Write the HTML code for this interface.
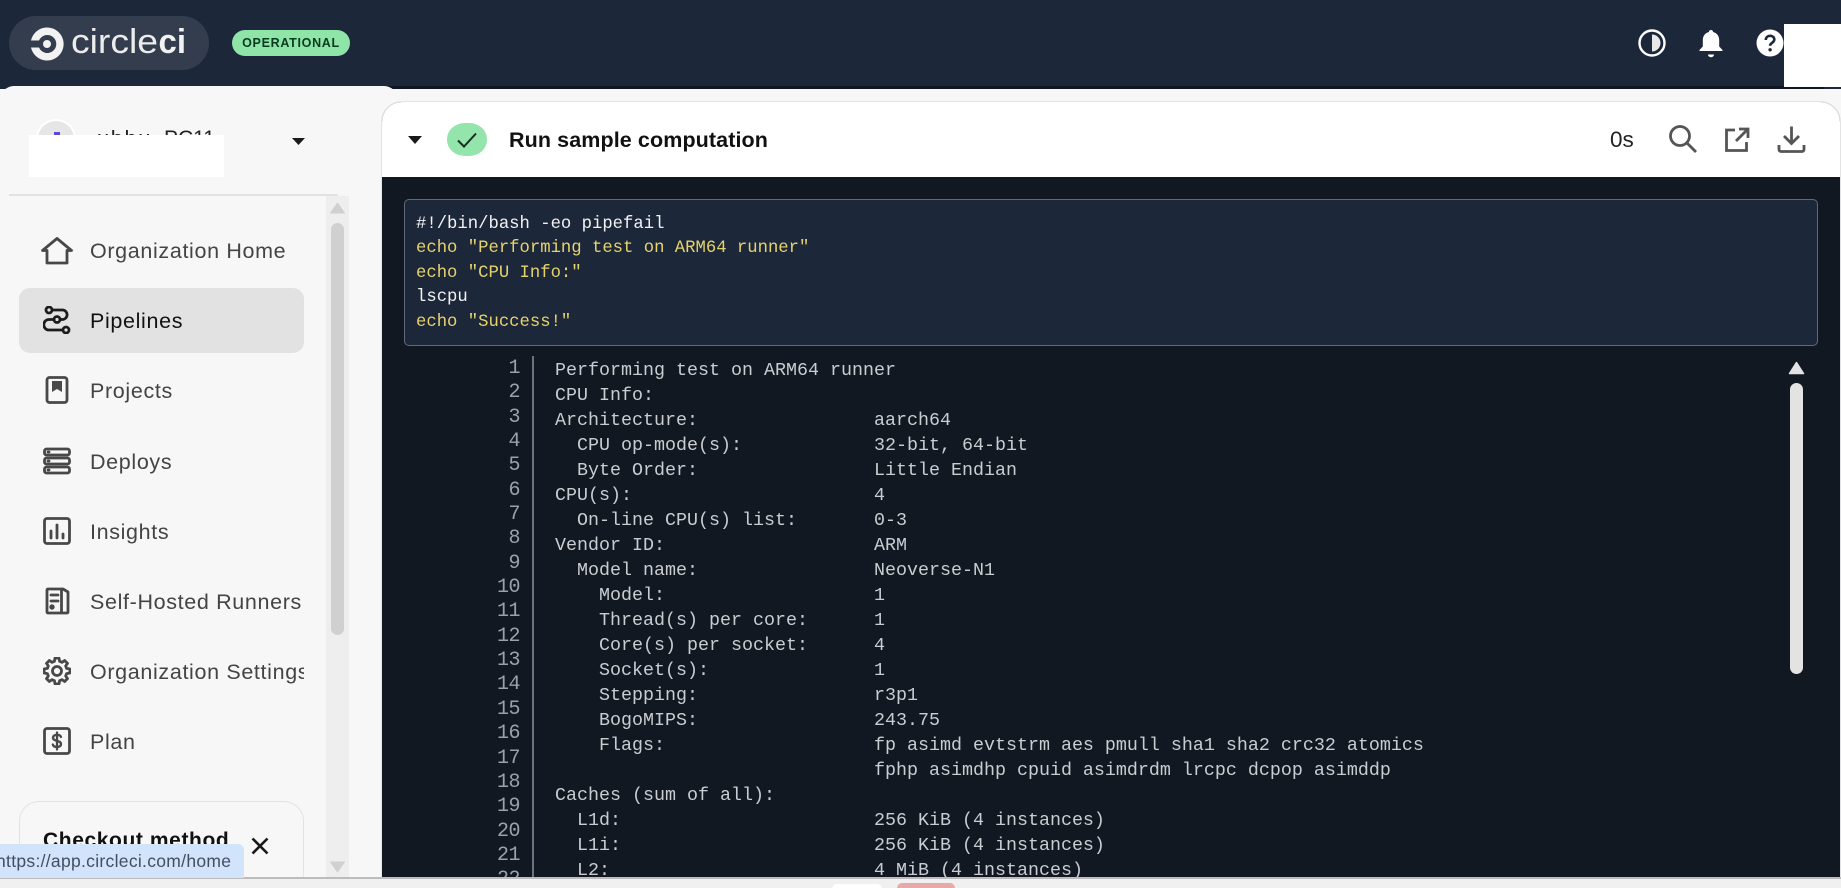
<!DOCTYPE html>
<html><head><meta charset="utf-8"><title>CircleCI</title>
<style>
html,body{margin:0;padding:0;width:1841px;height:888px;overflow:hidden;background:#f7f7f7}
body{position:relative;font-family:"Liberation Sans",sans-serif}
.a{position:absolute}
.nav{position:absolute;left:90px;width:214px;overflow:hidden;white-space:nowrap;font-size:21.5px;line-height:30px;letter-spacing:.65px;color:#444}
.ic{position:absolute;left:43px;width:28px;height:28px;fill:none;stroke:#484848;stroke-width:2.8;stroke-linejoin:round;stroke-linecap:round}
pre{margin:0;font-family:"Liberation Mono",monospace}
</style></head><body>
<div class="a" style="left:0;top:0;width:1841px;height:90px;background:#1c273a"></div>
<div class="a" style="left:380px;top:86px;width:1445px;height:3px;background:#0f1621;border-radius:0 0 6px 0"></div>
<div class="a" style="left:0;top:89px;width:1841px;height:799px;background:#f7f7f7"></div>
<div class="a" style="left:0;top:86px;width:398px;height:30px;background:#f7f7f7;border-radius:14px 14px 0 0"></div>

<!-- logo -->
<div class="a" style="left:9px;top:16px;width:200px;height:54px;border-radius:27px;background:#333d4e"></div>
<svg class="a" style="left:29px;top:26px" width="36" height="36" viewBox="0 0 36 36"><path d="M2 14.500 A16.500 16.500 0 1 1 2 21.500 H10 A9 9 0 1 0 10 14.500 Z" fill="#f2f2f2"/><circle cx="18" cy="18" r="4" fill="#f2f2f2"/></svg>
<svg class="a" style="left:68px;top:20px" width="124" height="48"><text x="3" y="33" font-size="34" fill="#ececec" font-family="Liberation Sans, sans-serif" textLength="87" lengthAdjust="spacingAndGlyphs">circle</text><text x="90.500" y="33" font-size="34" font-weight="700" fill="#f2f2f2" font-family="Liberation Sans, sans-serif" textLength="27.500" lengthAdjust="spacingAndGlyphs">ci</text></svg>
<div class="a" style="left:232px;top:30px;width:118px;height:26px;border-radius:13px;background:#8fe5a8;text-align:center;font-size:12.5px;font-weight:700;line-height:26px;letter-spacing:.7px;color:#0a3b1e">OPERATIONAL</div>

<!-- header icons -->
<svg class="a" style="left:1636px;top:27px" width="32" height="32" viewBox="0 0 32 32"><circle cx="16" cy="16" r="12.500" fill="none" stroke="#fff" stroke-width="2.400"/><path d="M16 7.500 A8.500 8.500 0 0 1 16 24.500 Z" fill="#e8e8e8"/></svg>
<svg class="a" style="left:1697px;top:29px" width="28" height="29" viewBox="0 0 28 29"><path d="M14 1c1.200 0 2 .8 2.100 2 4 1 6.100 4.200 6.100 8.200v6.300l3.300 3.500v1H2.500v-1l3.300-3.500v-6.300c0-4 2.100-7.200 6.100-8.200.1-1.200.9-2 2.100-2z" fill="#fff"/><path d="M11 25.500h6c0 1.600-1.300 2.700-3 2.700s-3-1.100-3-2.700z" fill="#fff"/></svg>
<svg class="a" style="left:1756px;top:29px" width="28" height="28" viewBox="0 0 28 28"><circle cx="14" cy="14" r="13.500" fill="#fff"/><path d="M9.800 11c0-2.600 2-4.200 4.300-4.200 2.500 0 4.200 1.600 4.200 3.700 0 3.300-4.200 3.300-4.200 6.200" fill="none" stroke="#1c273a" stroke-width="2.600"/><circle cx="14.100" cy="20.800" r="1.700" fill="#1c273a"/></svg>
<div class="a" style="left:1784px;top:24px;width:57px;height:63px;background:#fff"></div>

<!-- org switcher -->
<div class="a" style="left:38px;top:121px;width:36px;height:36px;border-radius:50%;background:#e6e6e6;box-shadow:0 0 0 2px #fff"></div>
<div class="a" style="left:54px;top:132px;width:6px;height:8px;background:#5b48d9"></div>
<div class="a" style="left:97px;top:126px;font-size:22px;line-height:26px;color:#222;letter-spacing:1.500px;white-space:nowrap">ubbu</div>
<div class="a" style="left:164px;top:126px;font-size:21px;line-height:26px;color:#222;white-space:nowrap">PC11</div>
<div class="a" style="left:29px;top:135px;width:195px;height:42px;background:#fff"></div>
<svg class="a" style="left:292px;top:138px" width="13" height="7"><path d="M0 0H13L6.500 7Z" fill="#1a1a1a"/></svg>
<div class="a" style="left:9px;top:194px;width:329px;height:2px;background:#e2e2e2"></div>

<!-- sidebar scrollbar -->
<div class="a" style="left:326px;top:196px;width:23px;height:681px;background:#eeeeee"></div>
<div class="a" style="left:331px;top:223px;width:13px;height:412px;border-radius:7px;background:#d0d0d0"></div>
<svg class="a" style="left:330px;top:202px" width="15" height="12"><path d="M7.500 1L14.500 11H.5Z" fill="#d0d0d0" stroke="#d0d0d0" stroke-linejoin="round"/></svg>
<svg class="a" style="left:330px;top:861px" width="15" height="12"><path d="M.5 1H14.500L7.500 11Z" fill="#d0d0d0" stroke="#d0d0d0" stroke-linejoin="round"/></svg>

<!-- nav -->
<div class="a" style="left:19px;top:288px;width:285px;height:65px;border-radius:11px;background:#e2e2e2"></div>
<svg class="ic" style="top:236px;left:41px;width:32px;height:30px" viewBox="0 0 32 30"><path d="M1.500 14.500L16 2.500l14.500 12h-4.500V27h-20V14.500Z"/></svg>
<div class="nav" style="top:236px">Organization Home</div>
<svg class="ic" style="top:306px;stroke:#1c1c1c" viewBox="0 0 28 28"><circle cx="6" cy="4" r="3"/><circle cx="14" cy="13.500" r="3"/><circle cx="23" cy="24" r="3"/><path d="M9 4h11a4.800 4.800 0 0 1 0 9.500h-3M11 13.500H6a5 5 0 0 0 0 10.500h14"/></svg>
<div class="nav" style="top:306px;color:#111">Pipelines</div>
<svg class="ic" style="top:376px" viewBox="0 0 28 28"><rect x="4" y="1.500" width="20" height="25" rx="2.500"/><path d="M9 5h10v11l-5-3-5 3Z" fill="#484848" stroke="none"/></svg>
<div class="nav" style="top:376px">Projects</div>
<svg class="ic" style="top:447px" viewBox="0 0 28 28"><rect x="1.500" y="2" width="25" height="6" rx="2"/><rect x="1.500" y="11" width="25" height="6" rx="2"/><rect x="1.500" y="20" width="25" height="6" rx="2"/><path d="M5 5h1M5 14h1M5 23h1"/></svg>
<div class="nav" style="top:447px">Deploys</div>
<svg class="ic" style="top:517px" viewBox="0 0 28 28"><rect x="1.500" y="1.500" width="25" height="25" rx="2.500"/><path d="M8 21v-7M14 21V8M20 21v-4"/></svg>
<div class="nav" style="top:517px">Insights</div>
<svg class="ic" style="top:587px" viewBox="0 0 28 28"><path d="M4 3a1 1 0 0 1 1-1h15l5 3v20a1 1 0 0 1-1 1H5a1 1 0 0 1-1-1ZM18.500 2v24"/><path d="M8 8h7M8 14h7"/><circle cx="9" cy="20" r="1.300" fill="#484848"/></svg>
<div class="nav" style="top:587px">Self-Hosted Runners</div>
<svg class="ic" style="top:657px" viewBox="0 0 28 28"><circle cx="14" cy="14" r="4.500"/><path d="M23.660 11.410L26.840 11.970V16.030L23.660 16.590L22.660 19L24.520 21.640L21.640 24.520L19 22.660L16.590 23.660L16.030 26.840H11.970L11.410 23.660L9 22.660L6.360 24.520L3.480 21.640L5.340 19L4.340 16.590L1.160 16.030V11.970L4.340 11.410L5.340 9L3.480 6.360L6.360 3.480L9 5.340L11.410 4.340L11.970 1.160H16.030L16.590 4.340L19 5.340L21.640 3.480L24.520 6.360L22.660 9Z"/></svg>
<div class="nav" style="top:657px">Organization Settings</div>
<svg class="ic" style="top:727px" viewBox="0 0 28 28"><rect x="1.500" y="1.500" width="25" height="25" rx="2.500"/><path d="M18 10c-.5-1.600-2-2.200-4-2.200-2.300 0-4 1-4 2.900 0 4 8 2.300 8 6.300 0 2-1.800 3-4 3-2.100 0-3.700-.8-4.200-2.500M14 5.500v17" stroke-width="2.300"/></svg>
<div class="nav" style="top:727px">Plan</div>

<!-- checkout card -->
<div class="a" style="left:19px;top:801px;width:283px;height:100px;border:1.500px solid #e3e3e3;border-radius:20px"></div>
<div class="a" style="left:43px;top:828px;font-size:21px;font-weight:700;line-height:26px;letter-spacing:.6px;color:#111;white-space:nowrap">Checkout method</div>
<svg class="a" style="left:250px;top:836px" width="20" height="20"><path d="M2.500 2.500L17.500 17.500M17.500 2.500L2.500 17.500" stroke="#1a1a1a" stroke-width="2.600"/></svg>

<!-- main card -->
<div class="a" style="left:382px;top:102px;width:1458px;height:775px;background:#111822;border-radius:20px 20px 0 0;overflow:hidden;box-shadow:0 0 0 1px #e3e3e3"></div>
<div class="a" style="left:382px;top:102px;width:1458px;height:75px;background:#fff;border-radius:20px 20px 0 0"></div>
<svg class="a" style="left:408px;top:136px" width="14" height="8"><path d="M0 0H14L7 8Z" fill="#1a1a1a"/></svg>
<div class="a" style="left:447px;top:123px;width:40px;height:33px;border-radius:18px/16px;background:#93e5ab"></div>
<svg class="a" style="left:456px;top:131px" width="22" height="18"><path d="M2 9.500L8 15.500L20 2.500" fill="none" stroke="#15301f" stroke-width="2"/></svg>
<div class="a" style="left:509px;top:125.500px;font-size:21.500px;font-weight:700;line-height:28px;letter-spacing:.1px;color:#111;white-space:nowrap">Run sample computation</div>
<div class="a" style="left:1610px;top:126px;font-size:22.500px;line-height:28px;color:#222">0s</div>
<svg class="a" style="left:1668px;top:124px" width="30" height="30" viewBox="0 0 30 30" fill="none" stroke="#555" stroke-width="2.800"><circle cx="12" cy="12" r="9.500"/><path d="M18.500 18.500L28 28"/></svg>
<svg class="a" style="left:1724px;top:127px" width="26" height="26" viewBox="0 0 26 26" fill="none" stroke="#555" stroke-width="2.800"><path d="M11 3H2.500v20.500h20V15M15 2h9v9M23.500 2.500L12 14"/></svg>
<svg class="a" style="left:1777px;top:125px" width="29" height="29" viewBox="0 0 29 29" fill="none" stroke="#555" stroke-width="2.800"><path d="M14.500 1.500V18M7 11l7.500 7.500L22 11M2 20v4.500a2 2 0 0 0 2 2h21a2 2 0 0 0 2-2V20"/></svg>

<!-- script -->
<div class="a" style="left:404px;top:199px;width:1412px;height:145px;background:#1c273a;border:1px solid #5f6a7d;border-radius:5px"></div>
<pre class="a" style="left:416px;top:212.500px;font-size:17.250px;line-height:24.660px;color:#f2f2f2">#!/bin/bash -eo pipefail
<span style="color:#e6d36c">echo "Performing test on ARM64 runner"
echo "CPU Info:"</span>
lscpu
<span style="color:#e6d36c">echo "Success!"</span></pre>

<!-- log -->
<div class="a" style="left:382px;top:356px;width:1400px;height:521px;overflow:hidden">
<pre class="a" style="left:0;top:1px;width:138px;text-align:right;font-size:20px;letter-spacing:-.5px;line-height:24.350px;color:#9aa1ad">1
2
3
4
5
6
7
8
9
10
11
12
13
14
15
16
17
18
19
20
21
22</pre>
<div class="a" style="left:150px;top:0;width:2px;height:521px;background:#6b7382"></div>
<pre class="a" style="left:173px;top:1.500px;font-size:18.330px;line-height:25px;color:#c9ccd1">Performing test on ARM64 runner
CPU Info:
Architecture:                aarch64
  CPU op-mode(s):            32-bit, 64-bit
  Byte Order:                Little Endian
CPU(s):                      4
  On-line CPU(s) list:       0-3
Vendor ID:                   ARM
  Model name:                Neoverse-N1
    Model:                   1
    Thread(s) per core:      1
    Core(s) per socket:      4
    Socket(s):               1
    Stepping:                r3p1
    BogoMIPS:                243.75
    Flags:                   fp asimd evtstrm aes pmull sha1 sha2 crc32 atomics
                             fphp asimdhp cpuid asimdrdm lrcpc dcpop asimddp
Caches (sum of all):
  L1d:                       256 KiB (4 instances)
  L1i:                       256 KiB (4 instances)
  L2:                        4 MiB (4 instances)</pre>
</div>
<svg class="a" style="left:1788px;top:361px" width="17" height="14"><path d="M8.500 1.500L15.500 12.500H1.500Z" fill="#e3e3e3" stroke="#e3e3e3" stroke-width="1.500" stroke-linejoin="round"/></svg>
<div class="a" style="left:1790px;top:383px;width:13px;height:291px;border-radius:7px;background:#e3e3e3"></div>

<!-- bottom -->
<div class="a" style="left:0;top:877px;width:1841px;height:11px;background:#f0f0f0"></div>
<div class="a" style="left:0;top:877px;width:1841px;height:2px;background:#bcbcbc"></div>
<div class="a" style="left:832px;top:884px;width:50px;height:10px;border-radius:6px;background:#fff"></div>
<div class="a" style="left:897px;top:883px;width:58px;height:10px;border-radius:6px;background:#e8aaa6"></div>
<div class="a" style="left:0;top:844px;width:244px;height:34px;background:#d2e3fc;border-radius:0 6px 0 0;overflow:hidden"><div class="a" style="left:-4px;top:4px;font-size:17.500px;line-height:26px;letter-spacing:.3px;color:#444e5e;white-space:nowrap">https://app.circleci.com/home</div></div>
</body></html>
